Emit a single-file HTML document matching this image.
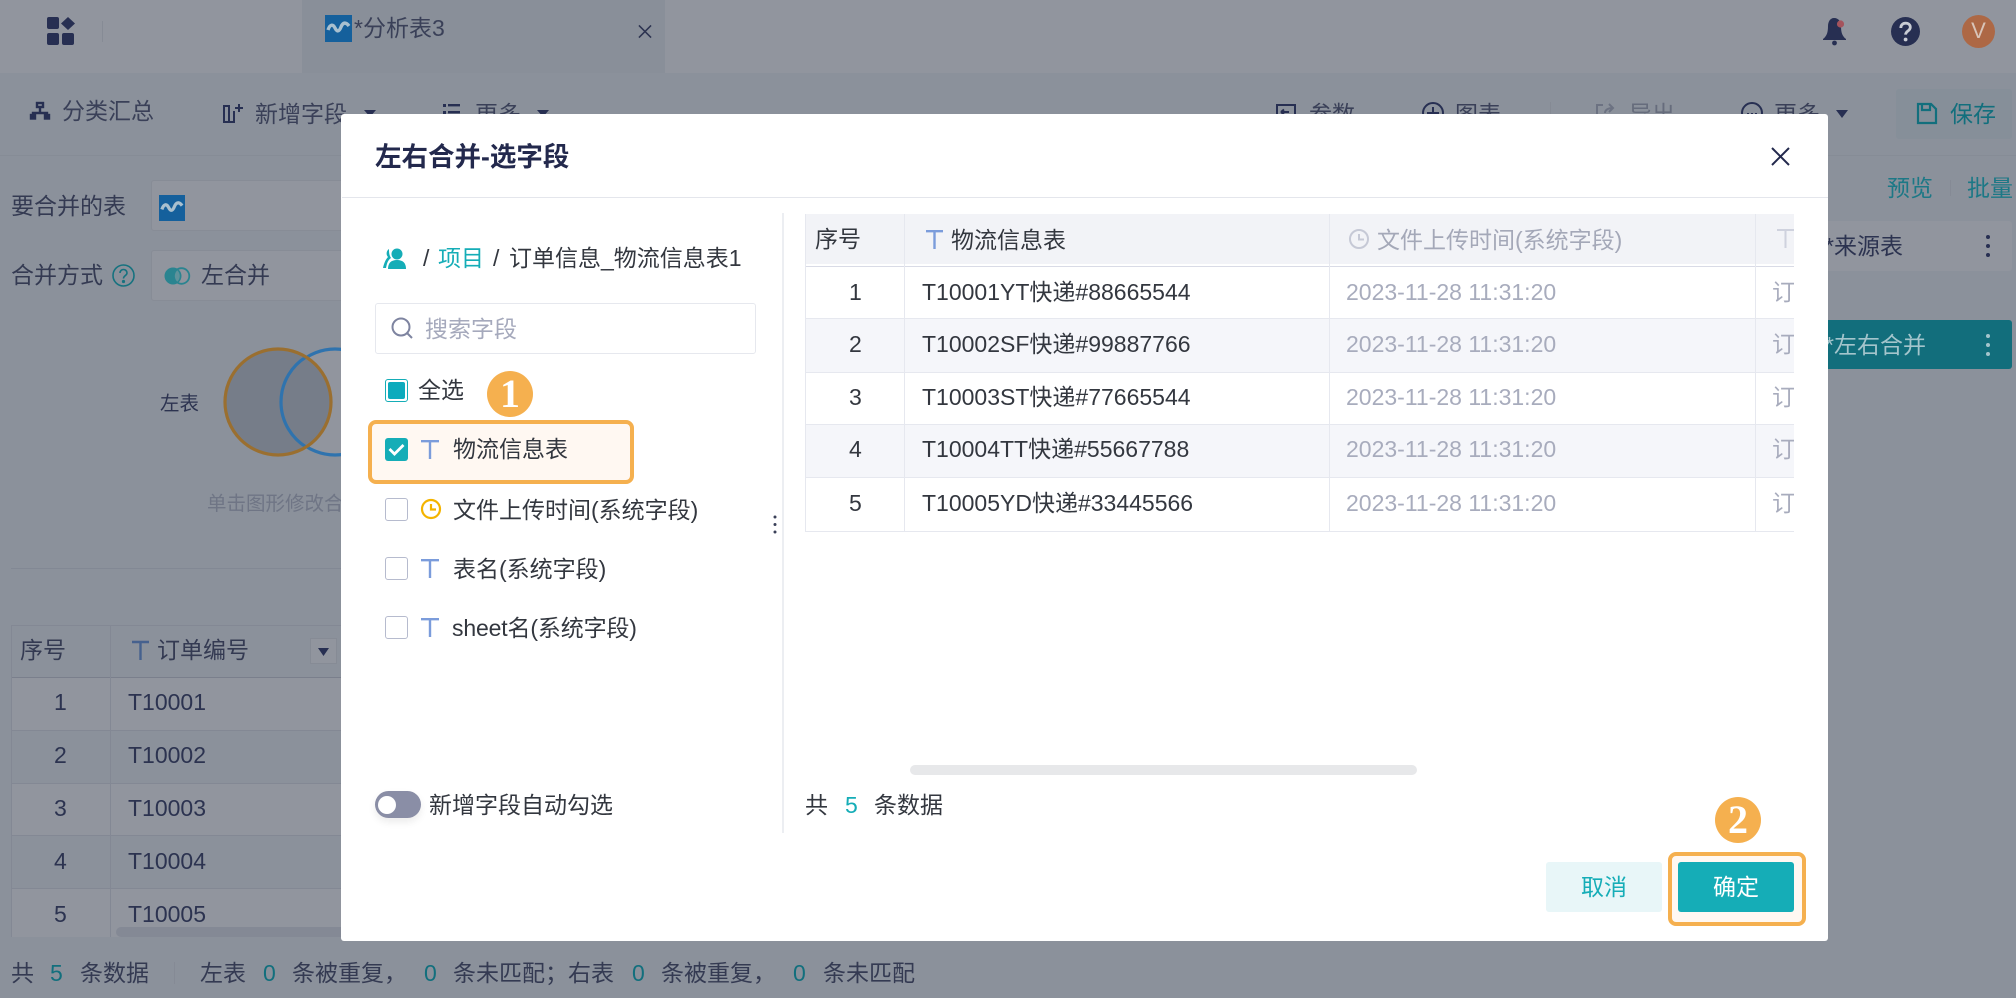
<!DOCTYPE html>
<html><head><meta charset="utf-8"><style>
html,body{margin:0;padding:0}
body{width:2016px;height:998px;overflow:hidden;position:relative;background:#8b919b;font-family:"Liberation Sans","Noto Sans CJK SC",sans-serif;font-size:23px;color:#2e3350}
.a{position:absolute}
.t{position:absolute;white-space:nowrap;line-height:30px;height:30px;margin-top:1px}
.d{color:#2c3350}
.m{color:#33373f}
.g{color:#a8acbd}
.c{color:#15adb7}
.dc{color:#126f7d}
.cb{position:absolute;width:21px;height:21px;border:1px solid #b6bbce;border-radius:3px;background:#fff}
svg{position:absolute;overflow:visible}
.h{position:absolute;height:1px;background:#e6e8ef}
.v{position:absolute;width:1px;background:#e6e8ef}
.tb .t{margin-top:0}
</style></head><body>

<!-- background -->
<div class="a" style="left:0;top:0;width:2016px;height:73px;background:#91959e"></div>
<div class="a" style="left:302px;top:0;width:363px;height:73px;background:#898f99"></div>
<div class="a" style="left:0;top:73px;width:2016px;height:82px;background:#8b919b"></div>
<div class="a" style="left:0;top:155px;width:2016px;height:1px;background:#868c96"></div>

<!-- logo -->
<svg style="left:46px;top:17px" width="30" height="28" viewBox="0 0 30 28" fill="#272f52"><rect x="1" y="0" width="12" height="12" rx="2"/><path d="M22 0l7 6.500-7 6.500-7-6.500z"/><rect x="1" y="16" width="12" height="12" rx="2"/><rect x="16" y="16" width="12" height="12" rx="2"/></svg>
<div class="a" style="left:102px;top:21px;width:1px;height:21px;background:#868b95"></div>

<!-- tab -->
<svg style="left:325px;top:15px" width="27" height="27" viewBox="0 0 27 27"><rect width="27" height="27" fill="#15609c"/><path d="M3 15c2-6 5-6 7-2s4 4 6-1 5-5 8-1" fill="none" stroke="#a9c0cf" stroke-width="3.400"/></svg>
<div class="t d" style="left:354px;top:12px;color:#3a4058">*分析表3</div>
<svg style="left:638px;top:24px" width="14" height="15" viewBox="0 0 15 15"><path d="M1 1l13 13M14 1L1 14" stroke="#2c3350" stroke-width="1.600"/></svg>

<!-- top right -->
<svg style="left:1822px;top:17px" width="25" height="28" viewBox="0 0 25 28" fill="#272f52"><path d="M12 1c5 0 7 4 7 8 0 6 1 10 5 13v1H1v-1c4-3 5-7 5-13 0-4 2-8 6-8z"/><circle cx="12.500" cy="26" r="2.400"/><circle cx="18.500" cy="7" r="3.600" fill="#a5535c"/></svg>
<svg style="left:1891px;top:17px" width="29" height="29" viewBox="0 0 29 29"><circle cx="14.500" cy="14.500" r="14.500" fill="#272f52"/><path d="M9.800 11c0-3 2-4.800 4.800-4.800s4.700 1.700 4.700 4c0 3.800-4.700 3.800-4.700 7.400" fill="none" stroke="#c9ccd4" stroke-width="2.800"/><circle cx="14.600" cy="22.500" r="1.900" fill="#c9ccd4"/></svg>
<div class="a" style="left:1962px;top:15px;width:33px;height:33px;border-radius:50%;background:#ad6845"></div>
<div class="t" style="left:1962px;top:15px;width:33px;text-align:center;color:#d8c4b8;font-size:22px">V</div>

<!-- toolbar -->
<svg style="left:30px;top:102px" width="20" height="18" viewBox="0 0 20 18" fill="none" stroke="#272f52" stroke-width="2.400"><rect x="7" y="1" width="6" height="4"/><path d="M10 5v5M3 16v-5h14v5"/><rect x="1" y="13" width="4" height="3.500" fill="#272f52"/><rect x="15" y="13" width="4" height="3.500" fill="#272f52"/></svg>
<div class="t" style="left:62px;top:95px;color:#3a4058">分类汇总</div>
<svg style="left:223px;top:103px" width="21" height="20" viewBox="0 0 21 20" fill="none" stroke="#272f52" stroke-width="2"><path d="M1 19V3h5v16zM6 19h6M11 8v11M16 1v8M12 5h8"/></svg>
<div class="t" style="left:255px;top:98px;color:#3a4058">新增字段</div>
<svg style="left:364px;top:110px" width="12" height="7"><path d="M0 0h12l-6 7z" fill="#272f52"/></svg>
<svg style="left:443px;top:104px" width="17" height="10" fill="#272f52"><rect x="0" y="0" width="3" height="3"/><rect x="5" y="0" width="12" height="2.400"/><rect x="0" y="7" width="3" height="3"/><rect x="5" y="7" width="12" height="2.400"/></svg>
<div class="t" style="left:475px;top:98px;color:#3a4058">更多</div>
<svg style="left:537px;top:110px" width="12" height="7"><path d="M0 0h12l-6 7z" fill="#272f52"/></svg>

<svg style="left:1276px;top:104px" width="20" height="14" fill="none" stroke="#272f52" stroke-width="2"><path d="M1 14V1h18v13M5 8h8M5 8l3-2.500M5 8l3 2.500"/></svg>
<div class="t" style="left:1309px;top:98px;color:#3a4058">参数</div>
<svg style="left:1422px;top:102px" width="22" height="22" fill="none" stroke="#272f52" stroke-width="2"><circle cx="11" cy="11" r="10"/><path d="M11 5v12M5 11h12"/></svg>
<div class="t" style="left:1455px;top:98px;color:#3a4058">图表</div>
<div class="a" style="left:1550px;top:102px;width:1px;height:12px;background:#858a94"></div>
<svg style="left:1596px;top:104px" width="20" height="14" fill="none" stroke="#6c7282" stroke-width="2"><path d="M1 14V1h6M9 9c0-3 3-5 8-5M13 0l4 4-4 4"/></svg>
<div class="t" style="left:1629px;top:98px;color:#666c7c">导出</div>
<svg style="left:1741px;top:102px" width="22" height="22" fill="none" stroke="#272f52" stroke-width="2"><circle cx="11" cy="11" r="10"/><path d="M6 12h2M10 12h2M14 12h2"/></svg>
<div class="t" style="left:1774px;top:98px;color:#3a4058">更多</div>
<svg style="left:1836px;top:110px" width="12" height="8"><path d="M0 0h12l-6 8z" fill="#272f52"/></svg>
<div class="a" style="left:1896px;top:89px;width:116px;height:50px;background:#868f99;border-radius:3px"></div>
<svg style="left:1917px;top:103px" width="20" height="21" fill="none" stroke="#126f7d" stroke-width="2.200"><path d="M1 1h13l5 5v14H1zM5 1v6h8V1"/></svg>
<div class="t dc" style="left:1950px;top:98px">保存</div>

<!-- left config -->
<div class="t" style="left:11px;top:190px;color:#343a52">要合并的表</div>
<div class="a" style="left:151px;top:180px;width:200px;height:51px;background:#91959e;border:1px solid #878c96;border-radius:3px;box-sizing:border-box"></div>
<svg style="left:159px;top:195px" width="26" height="26" viewBox="0 0 27 27"><rect width="27" height="27" fill="#15609c"/><path d="M3 15c2-6 5-6 7-2s4 4 6-1 5-5 8-1" fill="none" stroke="#a9c0cf" stroke-width="3.400"/></svg>
<div class="t" style="left:11px;top:259px;color:#343a52">合并方式</div>
<svg style="left:112px;top:264px" width="23" height="23" fill="none" stroke="#16727f" stroke-width="1.600"><circle cx="11.500" cy="11.500" r="10.500"/><path d="M8 9c0-2 1.500-3.500 3.500-3.500S15 7 15 9c0 2.500-3.500 2.500-3.500 5.500"/><circle cx="11.500" cy="17.500" r=".8"/></svg>
<div class="a" style="left:151px;top:250px;width:200px;height:51px;background:#91959e;border:1px solid #878c96;border-radius:3px;box-sizing:border-box"></div>
<svg style="left:164px;top:267px" width="27" height="18" fill="none"><circle cx="9" cy="9" r="8.500" fill="#2a8490"/><circle cx="17.500" cy="9" r="7.800" stroke="#2a8490" stroke-width="1.800"/><path d="M13.300 3.200A8 8 0 0 1 13.300 14.800A8 8 0 0 1 13.300 3.200Z" fill="#5f929b"/></svg>
<div class="t" style="left:201px;top:259px;color:#343a52">左合并</div>

<div class="t" style="left:160px;top:388px;font-size:19.500px;color:#2c3350">左表</div>
<svg style="left:0;top:0" width="341" height="500"><circle cx="335" cy="402" r="53" fill="#91959e" stroke="#2f73ae" stroke-width="3.200"/><circle cx="278" cy="402" r="53" fill="#767d89"/><path d="M306 357A53 53 0 0 0 306 447" fill="none" stroke="#2f73ae" stroke-width="3.200"/><circle cx="278" cy="402" r="53" fill="none" stroke="#9a6f30" stroke-width="3.200"/></svg>
<div class="t" style="left:207px;top:488px;font-size:19.500px;color:#6f7585">单击图形修改合并方式</div>
<div class="a" style="left:11px;top:568px;width:330px;height:1px;background:#828894"></div>

<!-- left table -->
<div class="a" style="left:12px;top:625px;width:340px;height:312px;background:#91959e"></div>
<div class="a" style="left:12px;top:625px;width:340px;height:52px;background:#8b919b"></div>
<div class="a" style="left:12px;top:730px;width:340px;height:53px;background:#8b919b"></div>
<div class="a" style="left:12px;top:835px;width:340px;height:53px;background:#8b919b"></div>
<div class="a" style="left:12px;top:677px;width:340px;height:1px;background:#7a7f8c"></div>
<div class="a" style="left:12px;top:730px;width:340px;height:1px;background:#838894"></div>
<div class="a" style="left:12px;top:783px;width:340px;height:1px;background:#838894"></div>
<div class="a" style="left:12px;top:835px;width:340px;height:1px;background:#838894"></div>
<div class="a" style="left:12px;top:888px;width:340px;height:1px;background:#838894"></div>
<div class="a" style="left:12px;top:625px;width:340px;height:1px;background:#838894"></div>
<div class="a" style="left:11px;top:625px;width:1px;height:312px;background:#838894"></div>
<div class="a" style="left:110px;top:625px;width:1px;height:312px;background:#838894"></div>
<div class="t" style="left:20px;top:634px;color:#343a52">序号</div>
<svg style="left:132px;top:641px" width="17" height="19" fill="none" stroke="#46618e" stroke-width="2.400"><path d="M0 1h17M8.500 1v18"/></svg>
<div class="t" style="left:157px;top:634px;color:#343a52">订单编号</div>
<div class="a" style="left:310px;top:638px;width:27px;height:26px;background:#91959e;border:1px solid #868b95;box-sizing:border-box"></div>
<svg style="left:318px;top:648px" width="11" height="8"><path d="M0 0h11l-5.500 8z" fill="#272f52"/></svg>
<div class="t" style="left:54px;top:686px;color:#2c3350">1</div><div class="t" style="left:128px;top:686px;color:#2c3350">T10001</div>
<div class="t" style="left:54px;top:739px;color:#2c3350">2</div><div class="t" style="left:128px;top:739px;color:#2c3350">T10002</div>
<div class="t" style="left:54px;top:792px;color:#2c3350">3</div><div class="t" style="left:128px;top:792px;color:#2c3350">T10003</div>
<div class="t" style="left:54px;top:845px;color:#2c3350">4</div><div class="t" style="left:128px;top:845px;color:#2c3350">T10004</div>
<div class="t" style="left:54px;top:898px;color:#2c3350">5</div><div class="t" style="left:128px;top:898px;color:#2c3350">T10005</div>
<div class="a" style="left:116px;top:927px;width:240px;height:10px;border-radius:5px;background:#848995"></div>

<!-- footer -->
<div class="t" style="left:11px;top:957px;color:#343a52">共</div>
<div class="t dc" style="left:50px;top:957px">5</div>
<div class="t" style="left:80px;top:957px;color:#343a52">条数据</div>
<div class="a" style="left:174px;top:962px;width:1px;height:22px;background:#858a95"></div>
<div class="t" style="left:200px;top:957px;color:#343a52">左表</div>
<div class="t dc" style="left:263px;top:957px">0</div>
<div class="t" style="left:292px;top:957px;color:#343a52">条被重复，</div>
<div class="t dc" style="left:424px;top:957px">0</div>
<div class="t" style="left:453px;top:957px;color:#343a52">条未匹配；右表</div>
<div class="t dc" style="left:632px;top:957px">0</div>
<div class="t" style="left:661px;top:957px;color:#343a52">条被重复，</div>
<div class="t dc" style="left:793px;top:957px">0</div>
<div class="t" style="left:823px;top:957px;color:#343a52">条未匹配</div>

<!-- right panel -->
<div class="t dc" style="left:1887px;top:172px;color:#1c7886">预览</div>
<div class="a" style="left:1950px;top:180px;width:1px;height:16px;background:#858a95"></div>
<div class="t dc" style="left:1967px;top:172px;color:#1c7886">批量</div>
<div class="a" style="left:1800px;top:221px;width:212px;height:50px;background:#91959e;border-radius:3px"></div>
<div class="t" style="left:1825px;top:230px;color:#2c3350">*来源表</div>
<svg style="left:1986px;top:235px" width="4" height="22" fill="#272f52"><circle cx="2" cy="2" r="2"/><circle cx="2" cy="11" r="2"/><circle cx="2" cy="20" r="2"/></svg>
<div class="a" style="left:1800px;top:320px;width:212px;height:49px;background:#126e7c;border-radius:3px"></div>
<div class="t" style="left:1825px;top:329px;color:#a4c5cc">*左右合并</div>
<svg style="left:1986px;top:334px" width="4" height="22" fill="#a4c5cc"><circle cx="2" cy="2" r="2"/><circle cx="2" cy="11" r="2"/><circle cx="2" cy="20" r="2"/></svg>

<!-- modal -->
<div class="a" style="left:341px;top:114px;width:1487px;height:827px;background:#fff;border-radius:3px"></div>
<div class="t" style="left:375px;top:141px;font-size:26.500px;font-weight:700;color:#23294d">左右合并-选字段</div>
<svg style="left:1771px;top:147px" width="19" height="19" viewBox="0 0 19 19"><path d="M1 1l17 17M18 1L1 18" stroke="#23294d" stroke-width="2"/></svg>
<div class="a" style="left:342px;top:197px;width:1486px;height:1px;background:#e4e6ec"></div>
<div class="a" style="left:782px;top:213px;width:2px;height:620px;background:#eceef2"></div>
<svg style="left:773px;top:515px" width="4" height="19" fill="#3a4058"><circle cx="2" cy="2" r="1.500"/><circle cx="2" cy="9.500" r="1.500"/><circle cx="2" cy="17" r="1.500"/></svg>

<!-- breadcrumb -->
<svg style="left:383px;top:248px" width="24" height="21" viewBox="0 0 24 21" fill="#15adb7"><circle cx="14" cy="6" r="5.500"/><path d="M5 21c0-6 3-9 9-9s9 3 9 9z"/><path d="M6 1c-3 2-3 6-1 8-2 2-4 6-5 11h3c1-5 2-8 5-10-2-3-2-6-2-9z"/></svg>
<div class="t m" style="left:423px;top:242px">/</div>
<div class="t c" style="left:438px;top:242px">项目</div>
<div class="t m" style="left:493px;top:242px">/</div>
<div class="t m" style="left:509px;top:242px">订单信息_物流信息表1</div>

<!-- search -->
<div class="a" style="left:375px;top:303px;width:381px;height:51px;border:1px solid #e6e8ee;border-radius:3px;box-sizing:border-box"></div>
<svg style="left:391px;top:317px" width="22" height="22" fill="none" stroke="#7e84a0" stroke-width="2"><circle cx="10" cy="10" r="8.500"/><path d="M16 16l5 5"/></svg>
<div class="t" style="left:425px;top:313px;color:#a5a9bc">搜索字段</div>

<!-- field list -->
<div class="cb" style="left:385px;top:379px;border-color:#15adb7"></div>
<div class="a" style="left:388px;top:382px;width:17px;height:17px;background:#0cabbd;border-radius:2px"></div>
<div class="t m" style="left:418px;top:374px">全选</div>

<div class="a" style="left:368px;top:420px;width:266px;height:64px;background:#fff8f2;border:4px solid #f5b04f;border-radius:8px;box-sizing:border-box"></div>
<div class="a" style="left:385px;top:438px;width:23px;height:23px;background:#15adb7;border-radius:3px"></div>
<svg style="left:388px;top:443px" width="17" height="13"><path d="M1.500 6l5 5 9-9" fill="none" stroke="#fff" stroke-width="2.800"/></svg>
<svg style="left:421px;top:440px" width="18" height="19" fill="none" stroke="#7b9cdb" stroke-width="2.400"><path d="M0 1.200h18M9 1v18"/></svg>
<div class="t m" style="left:453px;top:433px">物流信息表</div>

<div class="cb" style="left:385px;top:498px"></div>
<svg style="left:421px;top:499px" width="20" height="20" fill="none" stroke="#f4b400" stroke-width="2.200"><circle cx="10" cy="10" r="9"/><path d="M10 5v5.500h5"/></svg>
<div class="t m" style="left:453px;top:494px">文件上传时间(系统字段)</div>

<div class="cb" style="left:385px;top:557px"></div>
<svg style="left:421px;top:559px" width="18" height="19" fill="none" stroke="#7b9cdb" stroke-width="2.400"><path d="M0 1.200h18M9 1v18"/></svg>
<div class="t m" style="left:453px;top:553px">表名(系统字段)</div>

<div class="cb" style="left:385px;top:616px"></div>
<svg style="left:421px;top:618px" width="18" height="19" fill="none" stroke="#7b9cdb" stroke-width="2.400"><path d="M0 1.200h18M9 1v18"/></svg>
<div class="t m" style="left:452px;top:612px;letter-spacing:-.15px">sheet名(系统字段)</div>

<!-- toggle -->
<div class="a" style="left:375px;top:791px;width:46px;height:27px;border-radius:14px;background:#8a8ea6;box-shadow:0 4px 8px rgba(0,0,0,.08)"></div>
<div class="a" style="left:378px;top:796px;width:18px;height:18px;border-radius:50%;background:#fff"></div>
<div class="t m" style="left:429px;top:789px">新增字段自动勾选</div>

<!-- right table -->
<div class="a tb" style="left:805px;top:214px;width:989px;height:318px;overflow:hidden">
  <div class="a" style="left:0;top:0;width:989px;height:50px;background:#f2f3f7"></div>
  <div class="a" style="left:0;top:104px;width:989px;height:54px;background:#f5f6fa"></div>
  <div class="a" style="left:0;top:210px;width:989px;height:53px;background:#f5f6fa"></div>
  <div class="a" style="left:0;top:52px;width:989px;height:1px;background:#d9dbe6"></div>
  <div class="h" style="left:0;top:104px;width:989px"></div>
  <div class="h" style="left:0;top:158px;width:989px"></div>
  <div class="h" style="left:0;top:210px;width:989px"></div>
  <div class="h" style="left:0;top:263px;width:989px"></div>
  <div class="h" style="left:0;top:317px;width:989px"></div>
  <div class="v" style="left:0;top:0;height:318px"></div>
  <div class="v" style="left:99px;top:0;height:318px"></div>
  <div class="v" style="left:524px;top:0;height:318px"></div>
  <div class="v" style="left:950px;top:0;height:318px"></div>
  <div class="t m" style="left:10px;top:10px">序号</div>
  <svg style="left:121px;top:16px" width="17" height="19" fill="none" stroke="#7b9cdb" stroke-width="2.400"><path d="M0 1.200h17M8.500 1v18"/></svg>
  <div class="t m" style="left:146px;top:11px">物流信息表</div>
  <svg style="left:544px;top:15px" width="20" height="20" fill="none" stroke="#c6c9d6" stroke-width="2"><circle cx="10" cy="10" r="9"/><path d="M10 5v5.500h5"/></svg>
  <div class="t g" style="left:572px;top:11px;color:#a4a8b8">文件上传时间(系统字段)</div>
  <svg style="left:972px;top:15px" width="17" height="19" fill="none" stroke="#cfd2de" stroke-width="2"><path d="M0 1h17M8.500 1v18"/></svg>
  <div class="t m" style="left:44px;top:63px">1</div><div class="t m" style="left:117px;top:63px">T10001YT快递#88665544</div><div class="t g" style="left:541px;top:63px">2023-11-28 11:31:20</div><div class="t g" style="left:967px;top:63px">订单</div>
  <div class="t m" style="left:44px;top:115px">2</div><div class="t m" style="left:117px;top:115px">T10002SF快递#99887766</div><div class="t g" style="left:541px;top:115px">2023-11-28 11:31:20</div><div class="t g" style="left:967px;top:115px">订单</div>
  <div class="t m" style="left:44px;top:168px">3</div><div class="t m" style="left:117px;top:168px">T10003ST快递#77665544</div><div class="t g" style="left:541px;top:168px">2023-11-28 11:31:20</div><div class="t g" style="left:967px;top:168px">订单</div>
  <div class="t m" style="left:44px;top:220px">4</div><div class="t m" style="left:117px;top:220px">T10004TT快递#55667788</div><div class="t g" style="left:541px;top:220px">2023-11-28 11:31:20</div><div class="t g" style="left:967px;top:220px">订单</div>
  <div class="t m" style="left:44px;top:274px">5</div><div class="t m" style="left:117px;top:274px">T10005YD快递#33445566</div><div class="t g" style="left:541px;top:274px">2023-11-28 11:31:20</div><div class="t g" style="left:967px;top:274px">订单</div>
</div>

<!-- scrollbar / count -->
<div class="a" style="left:910px;top:765px;width:507px;height:10px;border-radius:5px;background:#e7e8ea"></div>
<div class="t m" style="left:805px;top:789px">共</div>
<div class="t c" style="left:845px;top:789px">5</div>
<div class="t m" style="left:874px;top:789px">条数据</div>

<!-- buttons -->
<div class="a" style="left:1546px;top:862px;width:116px;height:50px;background:#e8f6f8;border-radius:3px"></div>
<div class="t c" style="left:1546px;top:871px;width:116px;text-align:center">取消</div>
<div class="a" style="left:1668px;top:852px;width:138px;height:74px;background:#fff8f2;border:4px solid #f5b04f;border-radius:8px;box-sizing:border-box"></div>
<div class="a" style="left:1678px;top:862px;width:116px;height:50px;background:#15adb7;border-radius:3px"></div>
<div class="t" style="left:1678px;top:871px;width:116px;text-align:center;color:#fff">确定</div>

<!-- step markers -->
<div class="a" style="left:487px;top:371px;width:46px;height:46px;border-radius:50%;background:#f5b04f"></div>
<div class="t" style="left:487px;top:378px;width:46px;text-align:center;color:#fff;font-family:'Liberation Serif',serif;font-size:40px;font-weight:700">1</div>
<div class="a" style="left:1715px;top:797px;width:46px;height:46px;border-radius:50%;background:#f5b04f"></div>
<div class="t" style="left:1715px;top:804px;width:46px;text-align:center;color:#fff;font-family:'Liberation Serif',serif;font-size:40px;font-weight:700">2</div>

</body></html>
